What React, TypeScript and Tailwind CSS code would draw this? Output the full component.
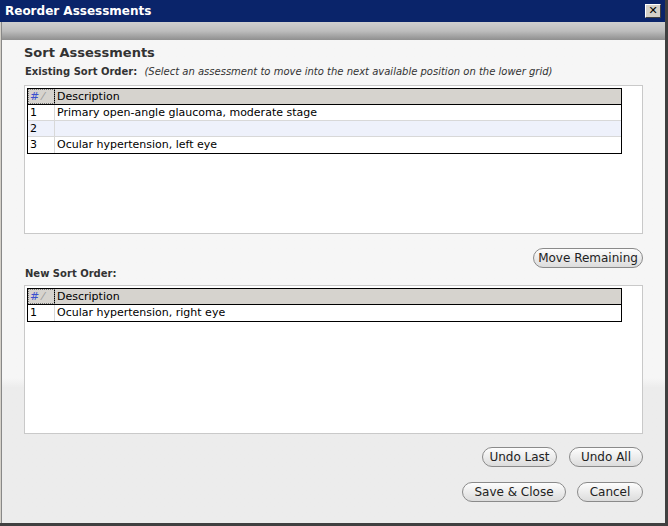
import React from "react";

const Btn = ({ children, w }: { children: React.ReactNode; w: string }) => (
  <button className={`${w} h-[20px] whitespace-nowrap rounded-full border border-[#8a8a8a] bg-gradient-to-b from-[#fdfdfd] to-[#dcdcdc] text-[12px] text-[#222] leading-none`}>{children}</button>
);

const Grid = ({ rows }: { rows: [string, string, boolean?][] }) => (
  <div className="h-[149px] border border-[#c9c9c9] bg-white p-[2px] pr-[20px]">
    <div className="border border-black">
      <div className="flex h-[16px] bg-[#d6d3ce] border-b border-black text-[11px] leading-[16px]">
        <div className="w-[27px] border-r border-black px-[2px] text-[#3a4fd0] outline-1 outline-dotted outline-[#777] -outline-offset-1">#<span className="text-[#999] ml-[3px]">⁄</span></div>
        <div className="px-[2px]">Description</div>
      </div>
      {rows.map(([n, d, hl], i) => (
        <div key={i} className={`flex h-[16px] text-[11px] leading-[16px] ${i < rows.length - 1 ? "border-b border-[#d8d8d8]" : ""} ${hl ? "bg-[#eef1fb]" : "bg-white"}`}>
          <div className="w-[27px] border-r border-[#d8d8d8] px-[2px]">{n}</div>
          <div className="px-[2px]">{d}</div>
        </div>
      ))}
    </div>
  </div>
);

export default function App() {
  return (
    <div className="w-[668px] h-[526px] flex flex-col bg-[#d4d0c8] border-r-[3px] border-b-[3px] border-[#404040]" style={{ fontFamily: "'DejaVu Sans', Tahoma, sans-serif" }}>
      <div className="h-[22px] bg-[#0a246a] flex items-center justify-between pl-[5px] pr-[4px] text-white font-bold text-[12px]">
        <span>Reorder Assessments</span>
        <div className="w-[16px] h-[14px] bg-[#d4d0c8] border border-t-white border-l-white border-r-[#404040] border-b-[#404040] text-black text-[11px] leading-[12px] text-center">✕</div>
      </div>
      <div className="flex-1 flex flex-col ml-[1px] border-l border-[#888]">
        <div className="h-[18px] bg-gradient-to-b from-[#cfcfcf] via-[#bdbdbd] to-[#8f8f8f]" />
        <div className="flex-1 flex flex-col bg-gradient-to-b from-[#f6f6f6] from-[70%] to-[#ececec] to-[72%] pl-[22px] pr-[22px] text-[#333]">
          <div className="mt-[5px] text-[13px] font-bold text-[#333] leading-[16px]">Sort Assessments</div>
          <div className="mt-[4px] ml-[1px] text-[10px] leading-[14px]"><b>Existing Sort Order:</b> <i className="ml-[4px]">(Select an assessment to move into the next available position on the lower grid)</i></div>
          <div className="mt-[6px] text-black">
            <Grid rows={[["1", "Primary open-angle glaucoma, moderate stage"], ["2", "", true], ["3", "Ocular hypertension, left eye"]]} />
          </div>
          <div className="flex justify-end mt-[14px]"><Btn w="w-[110px]">Move Remaining</Btn></div>
          <div className="ml-[1px] -mt-[1px] text-[10px] font-bold leading-[14px]">New Sort Order:</div>
          <div className="mt-[4px] text-black">
            <Grid rows={[["1", "Ocular hypertension, right eye"]]} />
          </div>
          <div className="flex justify-end gap-[12px] mt-[13px]"><Btn w="w-[75px]">Undo Last</Btn><Btn w="w-[74px]">Undo All</Btn></div>
          <div className="flex justify-end gap-[11px] mt-[15px]"><Btn w="w-[104px]">Save &amp; Close</Btn><Btn w="w-[66px]">Cancel</Btn></div>
        </div>
      </div>
    </div>
  );
}
